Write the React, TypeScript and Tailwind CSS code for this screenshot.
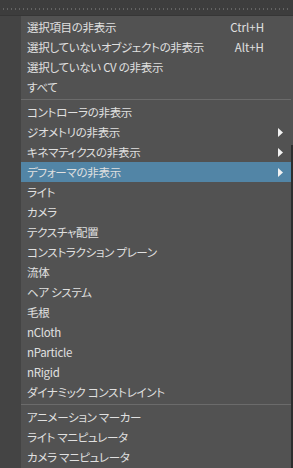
import React from "react";

type Item = { label: string; shortcut?: string; sub?: boolean; active?: boolean };

const sections: Item[][] = [
  [
    { label: "選択項目の非表示", shortcut: "Ctrl+H" },
    { label: "選択していないオブジェクトの非表示", shortcut: "Alt+H" },
    { label: "選択していない CV の非表示" },
    { label: "すべて" },
  ],
  [
    { label: "コントローラの非表示" },
    { label: "ジオメトリの非表示", sub: true },
    { label: "キネマティクスの非表示", sub: true },
    { label: "デフォーマの非表示", sub: true, active: true },
    { label: "ライト" },
    { label: "カメラ" },
    { label: "テクスチャ配置" },
    { label: "コンストラクション プレーン" },
    { label: "流体" },
    { label: "ヘア システム" },
    { label: "毛根" },
    { label: "nCloth" },
    { label: "nParticle" },
    { label: "nRigid" },
    { label: "ダイナミック コンストレイント" },
  ],
  [
    { label: "アニメーション マーカー" },
    { label: "ライト マニピュレータ" },
    { label: "カメラ マニピュレータ" },
  ],
];

function Arrow() {
  return (
    <svg width="5" height="9" viewBox="0 0 5 9">
      <path d="M0 0 L5 4.5 L0 9 Z" fill="#f2f2f2" />
    </svg>
  );
}

function Row({ item }: { item: Item }) {
  return (
    <div
      className={`flex h-[20px] items-center pl-[6px] pr-[8px] ${
        item.active ? "bg-[#5285a6]" : ""
      }`}
    >
      <span className="flex-1 whitespace-nowrap tracking-[-0.3px]">{item.label}</span>
      {item.shortcut && <span>{item.shortcut}</span>}
      <span className="flex w-[19px] justify-end">{item.sub && <Arrow />}</span>
    </div>
  );
}

export default function App() {
  return (
    <div
      className="relative h-[468px] w-[293px] overflow-hidden bg-[#525252] text-[11.5px] leading-[20px] text-[#e0e0e0] [font-feature-settings:'palt']"
      style={{ fontFamily: '"Noto Sans CJK JP", "Liberation Sans", sans-serif' }}
    >
      <div className="flex h-[16px] items-center border-b border-[#363636] bg-[#3d3d3d] px-[2px]">
        <svg width="100%" height="2" className="mt-[3px]">
          <line x1="1" y1="1" x2="100%" y2="1" stroke="#8c8c8c" strokeWidth="1" strokeDasharray="1 3" />
        </svg>
      </div>
      <div className="flex h-full">
        <div className="w-[21px] shrink-0 bg-[#444444]" />
        <div className="flex-1 pt-[1px] pr-[2px]">
          {sections.map((sec, i) => (
            <div key={i}>
              {i > 0 && <div className="my-[2px] h-px bg-[#6b6b6b]" />}
              {sec.map((it) => (
                <Row key={it.label} item={it} />
              ))}
            </div>
          ))}
        </div>
      </div>
      <div className="absolute right-0 top-[145px] bottom-0 w-[2px] bg-[#2e2e2e]" />
    </div>
  );
}
